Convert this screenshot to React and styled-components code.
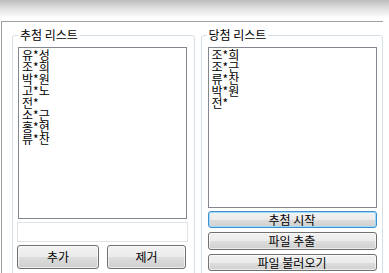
import React from 'react';
import styled, { createGlobalStyle } from 'styled-components';

const drawn = ['유*성', '조*희', '박*원', '고*노', '전*', '소*근', '홍*현', '류*찬'];
const winners = ['조*희', '조*근', '류*찬', '박*원', '전*'];

export default function App() {
  return (
    <Screen>
      <GlobalStyle />
      <TopBar />
      <Window>
        <Group>
          <Legend>추첨 리스트</Legend>
          <Content>
            <ListBox height={172}>
              {drawn.map((name) => (
                <Item key={name}>{name}</Item>
              ))}
            </ListBox>
            <TextBox />
            <ButtonRow>
              <Button width={82} height={24}>추가</Button>
              <Button width={79} height={24}>제거</Button>
            </ButtonRow>
          </Content>
        </Group>
        <Group>
          <Legend>당첨 리스트</Legend>
          <Content right>
            <ListBox height={161}>
              {winners.map((name) => (
                <Item key={name}>{name}</Item>
              ))}
            </ListBox>
            <ButtonStack>
              <Button focused height={17}>추첨 시작</Button>
              <Button height={18}>파일 추출</Button>
              <Button height={17}>파일 불러오기</Button>
            </ButtonStack>
          </Content>
        </Group>
      </Window>
    </Screen>
  );
}

const GlobalStyle = createGlobalStyle`
  body {
    margin: 0;
    background: #ffffff;
    font-family: "Noto Sans CJK KR", "Liberation Sans", sans-serif;
    font-size: 12px;
    color: #000000;
  }
`;

const Screen = styled.div`
  width: 389px;
  height: 273px;
  overflow: hidden;
  background: #ffffff;
`;

const TopBar = styled.div`
  height: 21px;
  background: linear-gradient(#bdbdbd 0px, #e6e6e6 10px, #ffffff 18px, #ffffff 21px);
`;

const Window = styled.div`
  margin-left: 1px;
  width: 382px;
  height: 260px;
  border-top: 1px solid #a0a0a0;
  border-left: 1px solid #a0a0a0;
  display: flex;
  gap: 6px;
  padding: 6px 0 0 10px;
  box-sizing: border-box;
`;

const Group = styled.fieldset`
  width: 183px;
  height: 250px;
  margin: 0;
  padding: 0;
  box-sizing: border-box;
  border: 1px solid #d5dfe5;
  border-radius: 3px;
  min-inline-size: 0;
`;

const Legend = styled.legend`
  margin-left: 5px;
  padding: 0 2px;
  font-size: 12px;
  line-height: 14px;
  height: 14px;
`;

const Content = styled.div`
  display: flex;
  flex-direction: column;
  padding: 5px 0 0 ${(p) => (p.right ? 6 : 5)}px;
`;

const ListBox = styled.div`
  width: 169px;
  height: ${(p) => p.height}px;
  box-sizing: border-box;
  border: 1px solid #828790;
  padding: 1px 3px;
  background: #ffffff;
`;

const Item = styled.div`
  font-size: 12px;
  line-height: 12px;
  height: 12px;
  white-space: nowrap;
`;

const TextBox = styled.div`
  margin: 3px 0 0 -1px;
  width: 171px;
  height: 20px;
  box-sizing: border-box;
  border: 1px solid #dfe3e8;
  background: #ffffff;
`;

const ButtonRow = styled.div`
  display: flex;
  gap: 8px;
  margin: 3px 0 0 -1px;
`;

const ButtonStack = styled.div`
  display: flex;
  flex-direction: column;
  gap: 4px;
  margin-top: 3px;
`;

const Button = styled.button`
  width: ${(p) => (p.width ? `${p.width}px` : '169px')};
  height: ${(p) => p.height}px;
  box-sizing: border-box;
  padding: 0;
  font-family: "Noto Sans CJK KR", "Liberation Sans", sans-serif;
  font-size: 12px;
  line-height: 12px;
  color: #000000;
  border: 1px solid ${(p) => (p.focused ? '#3c8fd0' : '#707070')};
  border-radius: 3px;
  background: linear-gradient(#f2f2f2 0%, #ebebeb 50%, #dddddd 51%, #cfcfcf 100%);
  box-shadow: inset 0 0 0 1px ${(p) => (p.focused ? '#9fdcf7' : 'rgba(255, 255, 255, 0.6)')};
  display: flex;
  align-items: center;
  justify-content: center;
`;
